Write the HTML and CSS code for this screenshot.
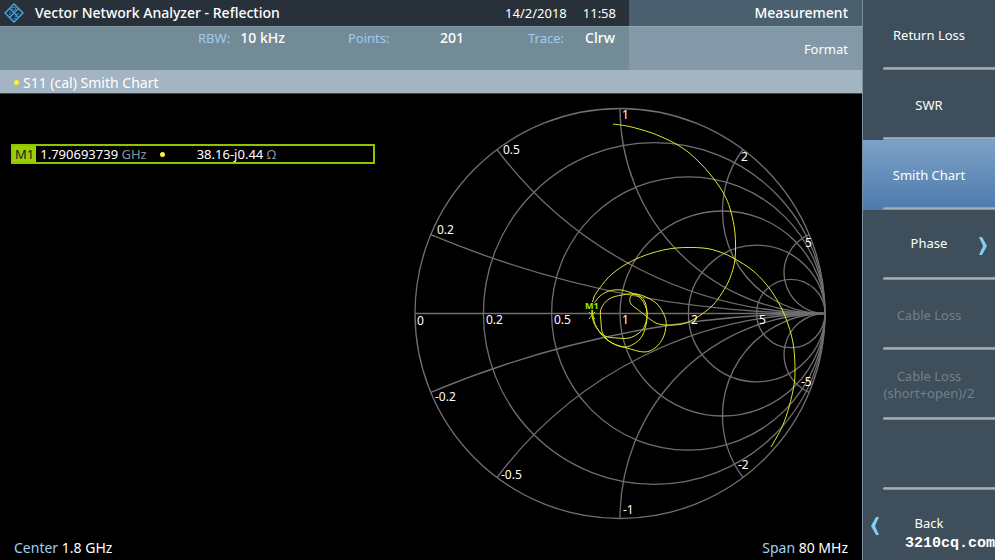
FILE: index.html
```html
<!DOCTYPE html>
<html lang="en">
<head>
    <meta charset="UTF-8">
    <meta name="viewport" content="width=device-width, initial-scale=1.0">
    <title>Vector Network Analyzer - Reflection</title>
    <link rel="stylesheet" href="styles.css">
</head>
<body>
    <main class="screen">
        <header class="topbar">
            <div class="title-bar">
                <svg class="logo" viewBox="0 0 20 20" aria-hidden="true">
                    <path d="M10 1L19 10L10 19L1 10Z" fill="#1c3346" stroke="#4ba3dc" stroke-width="1.5"/>
                    <path d="M5.5 5.5L14.5 14.5M14.5 5.5L5.5 14.5" stroke="#4ba3dc" stroke-width="1.2"/>
                    <path d="M8 8V4.5H11.5V7L9 7.5L12 9M12 11H15.5M11 13.5H13.5V15.5H9.5M5 9L7 10.5L5 12" fill="none" stroke="#3785b8"/>
                </svg>
                <h1>Vector Network Analyzer - Reflection</h1>
                <span class="date">14/2/2018</span>
                <span class="time">11:58</span>
            </div>
            <h2 class="menu-title">Measurement</h2>
            <dl class="settings">
                <div class="setting rbw"><dt>RBW:</dt><dd>10 kHz</dd></div>
                <div class="setting points"><dt>Points:</dt><dd>201</dd></div>
                <div class="setting trace"><dt>Trace:</dt><dd>Clrw</dd></div>
            </dl>
            <h3 class="menu-sub">Format</h3>
        </header>

        <div class="trace-title"><span class="dot"></span>S11 (cal) Smith Chart</div>

        <section class="plot">
            <div class="plot-body">
                <div class="marker-area">
                    <div class="marker">
                        <span class="marker-name">M1</span>
                        <span class="marker-freq">1.790693739 <span class="unit">GHz</span></span>
                        <span class="dot"></span>
                        <span class="marker-value">38.16-j0.44 <span class="unit">Ω</span></span>
                    </div>
                </div>
                <svg class="chart" viewBox="411 103 420 420" role="img" aria-label="Smith chart">
                    <g class="grid">
                        <!-- constant resistance -->
                        <circle cx="621" cy="313.5" r="205"/>
                        <circle cx="655.2" cy="313.5" r="170.8"/>
                        <circle cx="689.3" cy="313.5" r="136.7"/>
                        <circle cx="723.5" cy="313.5" r="102.5"/>
                        <circle cx="757.7" cy="313.5" r="68.3"/>
                        <circle cx="791.8" cy="313.5" r="34.2"/>
                        <path d="M416 313.5H826"/>
                        <!-- constant reactance -->
                        <path d="M431.8 234.7A1025 1025 0 0 0 826 313.5A1025 1025 0 0 0 431.8 392.3"/>
                        <path d="M498 149.5A410 410 0 0 0 826 313.5A410 410 0 0 0 498 477.5"/>
                        <path d="M621 108.5A205 205 0 0 0 826 313.5A205 205 0 0 0 621 518.5"/>
                        <path d="M744 149.5A102.5 102.5 0 0 0 826 313.5A102.5 102.5 0 0 0 744 477.5"/>
                        <path d="M810.2 234.7A41 41 0 0 0 826 313.5A41 41 0 0 0 810.2 392.3"/>
                    </g>
                    <path class="curve" id="trace"/>
                    <path class="cross" d="M590 312L596 319M596 312L590 319"/>
                    <text class="marker-label" x="586" y="309">M1</text>
                    <g class="scale">
                        <text x="418" y="325">0</text>
                        <text x="487" y="324">0.2</text>
                        <text x="555" y="324">0.5</text>
                        <text x="623" y="324">1</text>
                        <text x="692" y="324">2</text>
                        <text x="760" y="324">5</text>
                        <text x="438" y="234">0.2</text>
                        <text x="504" y="154">0.5</text>
                        <text x="623" y="119">1</text>
                        <text x="742" y="161">2</text>
                        <text x="806" y="247">5</text>
                        <text x="436" y="401">-0.2</text>
                        <text x="502" y="479">-0.5</text>
                        <text x="624" y="514">-1</text>
                        <text x="739" y="469">-2</text>
                        <text x="802" y="386">-5</text>
                    </g>
                </svg>
            </div>
            <footer class="range">
                <span><span class="label">Center</span> 1.8 GHz</span>
                <span><span class="label">Span</span> 80 MHz</span>
            </footer>
        </section>
    </main>

    <nav class="softkeys" aria-label="Format">
        <button type="button">Return Loss</button>
        <button type="button">SWR</button>
        <button type="button" class="active">Smith Chart</button>
        <button type="button" class="has-arrow">Phase
            <svg class="arrow right" viewBox="0 0 10 20" aria-hidden="true"><path d="M1 1H4L9 10L4 19H1L5 10Z"/></svg>
        </button>
        <button type="button" disabled>Cable Loss</button>
        <button type="button" disabled>Cable Loss<br>(short+open)/2</button>
        <button type="button" aria-label="Empty" disabled></button>
        <button type="button" class="has-arrow">Back
            <svg class="arrow left" viewBox="0 0 10 20" aria-hidden="true"><path d="M9 1H6L1 10L6 19H9L5 10Z"/></svg>
        </button>
        <span class="site">3210cq.com</span>
    </nav>

    <script>
        // S11 sweep points in chart coordinates
        const sweep = [
            [614, 124], [628, 126], [640, 129], [653, 133], [665, 138], [677, 144],
            [689, 152], [701, 163], [711, 174], [720, 186], [727, 198], [732, 212],
            [736, 233], [736, 259], [731, 278], [723, 293], [713, 306], [697, 318],
            [683, 324], [668, 325], [657, 323], [647, 316], [638, 309], [632, 304],
            [631, 298], [635, 294], [641, 296], [646, 302], [648, 312], [647, 325],
            [641, 339], [627, 347], [613, 343], [604, 334], [602, 322], [602, 309],
            [610, 299], [623, 295], [637, 294], [649, 298], [659, 305], [666, 317],
            [667, 326], [664, 338], [656, 348], [645, 352], [628, 348], [613, 343],
            [602, 334], [595, 321], [594, 307], [600, 297], [610, 291], [622, 290],
            [635, 294], [643, 300], [648, 312], [646, 325], [640, 333], [630, 338],
            [618, 338], [606, 336], [597, 327], [593, 315], [594, 300], [600, 289],
            [613, 274], [631, 262], [653, 253], [677, 248], [704, 248], [721, 252],
            [736, 259], [753, 270], [767, 284], [778, 300], [786, 316], [792, 334],
            [795, 350], [796, 370], [795, 385], [790, 407], [783, 427], [772, 447]
        ];

        // draw a smooth line through all points
        function smoothPath(points) {
            let d = `M${points[0]}`;
            for (let i = 0; i < points.length - 1; i++) {
                const p0 = points[i - 1] || points[i];
                const p1 = points[i];
                const p2 = points[i + 1];
                const p3 = points[i + 2] || p2;
                d += `C${p1[0] + (p2[0] - p0[0]) / 6},${p1[1] + (p2[1] - p0[1]) / 6}`;
                d += ` ${p2[0] - (p3[0] - p1[0]) / 6},${p2[1] - (p3[1] - p1[1]) / 6}`;
                d += ` ${p2}`;
            }
            return d;
        }

        document.getElementById('trace').setAttribute('d', smoothPath(sweep));
    </script>
</body>
</html>
```
FILE: styles.css
```css
* {
    margin: 0;
    padding: 0;
    box-sizing: border-box;
}

body {
    display: flex;
    min-height: 100vh;
    background: #000;
    color: #fff;
    font-family: "Noto Sans", "Open Sans", sans-serif;
    font-size: 14px;
    font-weight: 400;
    line-height: 16px;
}

h1, h2, h3 {
    font-size: 14px;
    font-weight: 500;
}

.screen {
    flex: 1;
    min-width: 0;
    display: flex;
    flex-direction: column;
}

.topbar {
    display: grid;
    grid-template-columns: 1fr 233px;
    grid-template-rows: 26px 44px;
}

.title-bar {
    display: flex;
    align-items: center;
    padding: 0 13px 0 4px;
    background: #28313a;
}

.logo {
    width: 20px;
    height: 20px;
    margin-right: 11px;
}

.date,
.time {
    font-size: 13px;
}

.date {
    margin-left: auto;
    margin-right: 16px;
}

.menu-title,
.menu-sub {
    display: flex;
    align-items: center;
    justify-content: flex-end;
    padding-right: 14px;
}

.menu-title {
    background: #4b606e;
}

.menu-sub {
    background: #8399a7;
    border-top: 1px solid #93a7b3;
    font-size: 13px;
    font-weight: 400;
}

.settings {
    display: flex;
    justify-content: flex-end;
    padding: 3px 14px 0 0;
    background: #738b97;
    border-top: 1px solid #8299a4;
}

.setting {
    display: flex;
    justify-content: space-between;
}

.rbw {
    width: 87px;
    margin-right: 63px;
}

.points {
    width: 116px;
    margin-right: 64px;
}

.trace {
    width: 87px;
}

dt {
    color: #9fcbf0;
    font-size: 13px;
}

dd {
    font-weight: 500;
}

.dot {
    width: 5px;
    height: 5px;
    border-radius: 50%;
    background: #fff12d;
}

.trace-title {
    display: flex;
    align-items: center;
    gap: 4px;
    height: 23px;
    padding: 2px 0 0 14px;
    background: #a3b4c2;
}

.plot {
    flex: 1;
    display: flex;
    flex-direction: column;
    justify-content: space-between;
    border-top: 1px solid #3c4850;
}

.plot-body {
    display: flex;
    align-items: flex-start;
    justify-content: space-between;
    gap: 35px;
    padding: 9px 32px 0 11px;
}

.marker-area {
    flex: 0 1 364px;
    padding-top: 41px;
}

.marker {
    display: flex;
    align-items: center;
    height: 20px;
    border: 2px solid #8fc400;
    font-size: 13px;
}

.marker-name {
    padding: 0 2px;
    margin-right: 4px;
    background: #9bd000;
    color: #16230a;
}

.marker .dot {
    margin: 0 32px 0 13px;
}

.unit {
    color: #89939b;
}

.chart {
    flex: 0 1 420px;
    min-width: 0;
}

.grid {
    fill: none;
    stroke: #706e72;
    stroke-width: 1.3;
}

.curve,
.cross {
    fill: none;
    stroke: #e4e42c;
    stroke-width: 1;
}

.cross {
    stroke: #a5e800;
}

.scale {
    fill: #fff;
    font-size: 12px;
}

.marker-label {
    fill: #a5e800;
    stroke: #000;
    stroke-width: 2;
    paint-order: stroke;
    font-size: 9px;
    font-weight: 700;
}

.range {
    display: flex;
    justify-content: space-between;
    padding: 0 14px 4px 14px;
}

.label {
    color: #9fd0f5;
}

.softkeys {
    position: relative;
    flex: 0 0 133px;
    display: grid;
    grid-template-rows: repeat(8, minmax(0, 1fr));
    background: #3e4e5b;
    border-left: 1px solid #7d919c;
}

.softkeys button {
    position: relative;
    border: none;
    background: none;
    color: #fff;
    font: inherit;
    font-size: 13px;
    line-height: 17px;
    cursor: pointer;
}

/* separator line under each key */
.softkeys button:not(:nth-of-type(8))::after {
    content: "";
    position: absolute;
    left: 20px;
    right: 0;
    bottom: 0;
    height: 3px;
    border-radius: 2px 0 0 2px;
    background: linear-gradient(#8797a4, #a5b4bf 60%, #6d7c87);
}

.softkeys .active {
    background: linear-gradient(#7ca2c8, #4d7aab);
}

.softkeys .has-arrow {
    padding-bottom: 4px;
}

.softkeys button:disabled {
    color: #71808b;
    cursor: default;
}

.arrow {
    position: absolute;
    top: 26px;
    width: 10px;
    height: 20px;
    fill: #83cdf8;
}

.right {
    right: 7px;
}

.left {
    left: 7px;
}

.site {
    position: absolute;
    right: 0;
    bottom: 8px;
    font: bold 15px/16px "Liberation Mono", monospace;
}
```
